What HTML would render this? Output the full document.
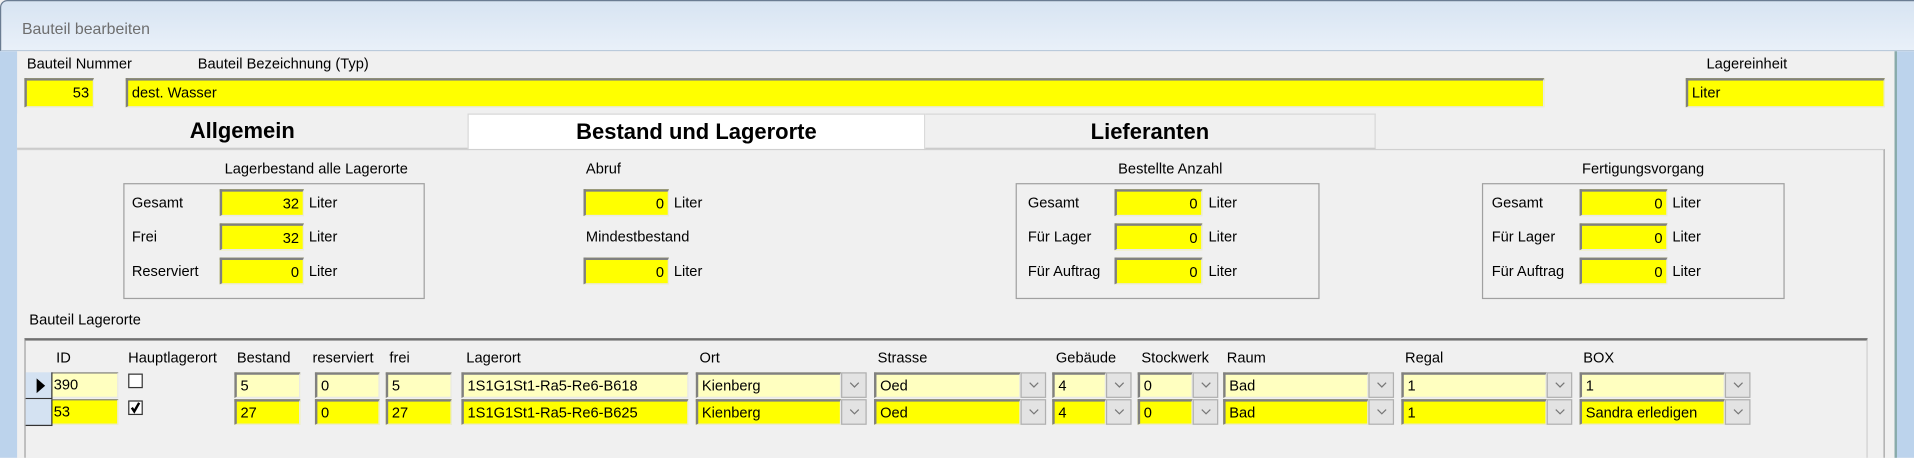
<!DOCTYPE html>
<html><head><meta charset="utf-8"><style>
*{box-sizing:border-box;margin:0;padding:0}
body{width:1914px;height:457px;overflow:hidden;background:#f0f0f0;font-family:"Liberation Sans",Arial,sans-serif}
#w{position:absolute;left:0;top:0;width:1568px;height:375px;transform:scale(1.2207);transform-origin:0 0;background:#f0f0f0;font-size:12px;color:#000}
.a{position:absolute;white-space:nowrap}
.f{position:absolute;background:#ffff00;border-top:2px solid #808080;border-left:2px solid #808080;border-bottom:1px solid #e8e8e8;border-right:1px solid #e8e8e8;padding:1px 3px;line-height:18px;font-size:12px;white-space:nowrap;overflow:hidden}
.r{text-align:right}
.l{background:#ffffc0}
.cb{position:absolute;width:21px;background:#e3e3e3;border:1px solid #b0b0b0}
.cb svg{position:absolute;left:6px;top:7px}
.grp{position:absolute;border:1px solid #a0a0a0;}
.tab{position:absolute;top:93px;height:29px;font-weight:bold;font-size:18px;text-align:center;line-height:29px;border-bottom:1px solid #c8c8c8}
</style></head><body><div id="w">
<div class="a" style="left:0;top:0;width:1568px;height:42px;background:linear-gradient(#d7e4f2,#e9f0f9);border-bottom:1px solid #b8c8da;border-top:1px solid #6a7c92;border-left:1px solid #6a7c92;border-top-left-radius:6px"></div>
<div class="a" style="left:18px;top:16px;font-size:13px;color:#6e6e6e">Bauteil bearbeiten</div>
<div class="a" style="left:0;top:42px;width:14px;height:333px;background:#bcd3ec"></div>
<div class="a" style="left:1552px;top:42px;width:16px;height:333px;background:#bcd3ec;border-left:2px solid #8aa"></div>
<div class="a" style="left:22px;top:45px">Bauteil Nummer</div>
<div class="a" style="left:162px;top:45px">Bauteil Bezeichnung (Typ)</div>
<div class="a" style="left:1398px;top:45px">Lagereinheit</div>
<div class="f r" style="left:20px;top:64px;width:57px;height:24px">53</div>
<div class="f" style="left:103px;top:64px;width:1162px;height:24px">dest. Wasser</div>
<div class="f" style="left:1381px;top:64px;width:163px;height:24px">Liter</div>
<div class="tab" style="left:14px;width:369px;background:#f0f0f0">Allgemein</div>
<div class="tab" style="left:383px;width:375px;background:#fff;border:1px solid #d8d8d8;border-bottom:none;height:30px">Bestand und Lagerorte</div>
<div class="tab" style="left:758px;width:369px;background:#f0f0f0;border-top:1px solid #d8d8d8;border-right:1px solid #d8d8d8">Lieferanten</div>
<div class="a" style="left:14px;top:122px;width:1530px;height:253px;border-right:1px solid #a0a0a0;border-top:1px solid #d0d0d0"></div>

<div class="a" style="left:184px;top:131px">Lagerbestand alle Lagerorte</div>
<div class="grp" style="left:101px;top:150px;width:247px;height:95px"></div>
<div class="a" style="left:108px;top:159px">Gesamt</div><div class="f r" style="left:180px;top:155px;width:69px;height:22px">32</div><div class="a" style="left:253px;top:159px">Liter</div>
<div class="a" style="left:108px;top:187px">Frei</div><div class="f r" style="left:180px;top:183px;width:69px;height:22px">32</div><div class="a" style="left:253px;top:187px">Liter</div>
<div class="a" style="left:108px;top:215px">Reserviert</div><div class="f r" style="left:180px;top:211px;width:69px;height:22px">0</div><div class="a" style="left:253px;top:215px">Liter</div>

<div class="a" style="left:480px;top:131px">Abruf</div>
<div class="f r" style="left:478px;top:155px;width:70px;height:22px">0</div><div class="a" style="left:552px;top:159px">Liter</div>
<div class="a" style="left:480px;top:187px">Mindestbestand</div>
<div class="f r" style="left:478px;top:211px;width:70px;height:22px">0</div><div class="a" style="left:552px;top:215px">Liter</div>

<div class="a" style="left:916px;top:131px">Bestellte Anzahl</div>
<div class="grp" style="left:832px;top:150px;width:249px;height:95px"></div>
<div class="a" style="left:842px;top:159px">Gesamt</div><div class="f r" style="left:913px;top:155px;width:72px;height:22px">0</div><div class="a" style="left:990px;top:159px">Liter</div>
<div class="a" style="left:842px;top:187px">Für Lager</div><div class="f r" style="left:913px;top:183px;width:72px;height:22px">0</div><div class="a" style="left:990px;top:187px">Liter</div>
<div class="a" style="left:842px;top:215px">Für Auftrag</div><div class="f r" style="left:913px;top:211px;width:72px;height:22px">0</div><div class="a" style="left:990px;top:215px">Liter</div>

<div class="a" style="left:1296px;top:131px">Fertigungsvorgang</div>
<div class="grp" style="left:1214px;top:150px;width:248px;height:95px"></div>
<div class="a" style="left:1222px;top:159px">Gesamt</div><div class="f r" style="left:1294px;top:155px;width:72px;height:22px">0</div><div class="a" style="left:1370px;top:159px">Liter</div>
<div class="a" style="left:1222px;top:187px">Für Lager</div><div class="f r" style="left:1294px;top:183px;width:72px;height:22px">0</div><div class="a" style="left:1370px;top:187px">Liter</div>
<div class="a" style="left:1222px;top:215px">Für Auftrag</div><div class="f r" style="left:1294px;top:211px;width:72px;height:22px">0</div><div class="a" style="left:1370px;top:215px">Liter</div>

<div class="a" style="left:24px;top:255px">Bauteil Lagerorte</div>
<div class="a" style="left:20px;top:277px;width:1510px;height:98px;border-top:2px solid #707070;border-left:1px solid #a0a0a0;border-right:1px solid #d0d0d0"></div>
<div class="a" style="left:46px;top:286px">ID</div>
<div class="a" style="left:105px;top:286px">Hauptlagerort</div>
<div class="a" style="left:194px;top:286px">Bestand</div>
<div class="a" style="left:256px;top:286px">reserviert</div>
<div class="a" style="left:319px;top:286px">frei</div>
<div class="a" style="left:382px;top:286px">Lagerort</div>
<div class="a" style="left:573px;top:286px">Ort</div>
<div class="a" style="left:719px;top:286px">Strasse</div>
<div class="a" style="left:865px;top:286px">Gebäude</div>
<div class="a" style="left:935px;top:286px">Stockwerk</div>
<div class="a" style="left:1005px;top:286px">Raum</div>
<div class="a" style="left:1151px;top:286px">Regal</div>
<div class="a" style="left:1297px;top:286px">BOX</div>

<div class="a" style="left:21px;top:305px;width:22px;height:22px;background:#d4e2f2;border-right:1px solid #333;border-bottom:1px solid #333"></div>
<div class="a" style="left:30px;top:310px;width:0;height:0;border-left:7px solid #000;border-top:6px solid transparent;border-bottom:6px solid transparent"></div>
<div class="a" style="left:21px;top:327px;width:22px;height:22px;background:#d4e2f2;border-right:1px solid #333;border-bottom:1px solid #333"></div>

<div class="f l" style="left:43px;top:305px;width:54px;height:21px;border-top-width:1px;border-left-width:0;line-height:17px;padding-left:1px">390</div>
<div class="a" style="left:105px;top:306px;width:12px;height:12px;border:1px solid #333;background:#fff"></div>
<div class="f l" style="left:192px;top:305px;width:54px;height:21px;line-height:17px">5</div>
<div class="f l" style="left:258px;top:305px;width:53px;height:21px;line-height:17px">0</div>
<div class="f l" style="left:316px;top:305px;width:54px;height:21px;line-height:17px">5</div>
<div class="f l" style="left:378px;top:305px;width:186px;height:21px;line-height:17px">1S1G1St1-Ra5-Re6-B618</div>

<div class="f" style="left:43px;top:327px;width:54px;height:21px;border-top-width:1px;border-left-width:0;line-height:17px;padding-left:1px">53</div>
<div class="a" style="left:105px;top:328px;width:12px;height:12px;border:1px solid #333;background:#fff"><svg width="10" height="10" style="position:absolute;left:0;top:0"><path d="M2 5 L4 8 L8 1" stroke="#000" stroke-width="2" fill="none"/></svg></div>
<div class="f" style="left:192px;top:327px;width:54px;height:21px;line-height:17px">27</div>
<div class="f" style="left:258px;top:327px;width:53px;height:21px;line-height:17px">0</div>
<div class="f" style="left:316px;top:327px;width:54px;height:21px;line-height:17px">27</div>
<div class="f" style="left:378px;top:327px;width:186px;height:21px;line-height:17px">1S1G1St1-Ra5-Re6-B625</div>

<div class="f l" style="left:570px;top:305px;width:119px;height:21px;line-height:17px">Kienberg</div><div class="cb" style="left:689px;top:305px;height:21px"><svg width="8" height="5"><path d="M0.5 0.5 L4 4 L7.5 0.5" stroke="#777" fill="none"/></svg></div>
<div class="f" style="left:570px;top:327px;width:119px;height:21px;line-height:17px">Kienberg</div><div class="cb" style="left:689px;top:327px;height:21px"><svg width="8" height="5"><path d="M0.5 0.5 L4 4 L7.5 0.5" stroke="#777" fill="none"/></svg></div>
<div class="f l" style="left:716px;top:305px;width:120px;height:21px;line-height:17px">Oed</div><div class="cb" style="left:836px;top:305px;height:21px"><svg width="8" height="5"><path d="M0.5 0.5 L4 4 L7.5 0.5" stroke="#777" fill="none"/></svg></div>
<div class="f" style="left:716px;top:327px;width:120px;height:21px;line-height:17px">Oed</div><div class="cb" style="left:836px;top:327px;height:21px"><svg width="8" height="5"><path d="M0.5 0.5 L4 4 L7.5 0.5" stroke="#777" fill="none"/></svg></div>
<div class="f l" style="left:862px;top:305px;width:44px;height:21px;line-height:17px">4</div><div class="cb" style="left:906px;top:305px;height:21px"><svg width="8" height="5"><path d="M0.5 0.5 L4 4 L7.5 0.5" stroke="#777" fill="none"/></svg></div>
<div class="f" style="left:862px;top:327px;width:44px;height:21px;line-height:17px">4</div><div class="cb" style="left:906px;top:327px;height:21px"><svg width="8" height="5"><path d="M0.5 0.5 L4 4 L7.5 0.5" stroke="#777" fill="none"/></svg></div>
<div class="f l" style="left:932px;top:305px;width:45px;height:21px;line-height:17px">0</div><div class="cb" style="left:977px;top:305px;height:21px"><svg width="8" height="5"><path d="M0.5 0.5 L4 4 L7.5 0.5" stroke="#777" fill="none"/></svg></div>
<div class="f" style="left:932px;top:327px;width:45px;height:21px;line-height:17px">0</div><div class="cb" style="left:977px;top:327px;height:21px"><svg width="8" height="5"><path d="M0.5 0.5 L4 4 L7.5 0.5" stroke="#777" fill="none"/></svg></div>
<div class="f l" style="left:1002px;top:305px;width:119px;height:21px;line-height:17px">Bad</div><div class="cb" style="left:1121px;top:305px;height:21px"><svg width="8" height="5"><path d="M0.5 0.5 L4 4 L7.5 0.5" stroke="#777" fill="none"/></svg></div>
<div class="f" style="left:1002px;top:327px;width:119px;height:21px;line-height:17px">Bad</div><div class="cb" style="left:1121px;top:327px;height:21px"><svg width="8" height="5"><path d="M0.5 0.5 L4 4 L7.5 0.5" stroke="#777" fill="none"/></svg></div>
<div class="f l" style="left:1148px;top:305px;width:119px;height:21px;line-height:17px">1</div><div class="cb" style="left:1267px;top:305px;height:21px"><svg width="8" height="5"><path d="M0.5 0.5 L4 4 L7.5 0.5" stroke="#777" fill="none"/></svg></div>
<div class="f" style="left:1148px;top:327px;width:119px;height:21px;line-height:17px">1</div><div class="cb" style="left:1267px;top:327px;height:21px"><svg width="8" height="5"><path d="M0.5 0.5 L4 4 L7.5 0.5" stroke="#777" fill="none"/></svg></div>
<div class="f l" style="left:1294px;top:305px;width:119px;height:21px;line-height:17px">1</div><div class="cb" style="left:1413px;top:305px;height:21px"><svg width="8" height="5"><path d="M0.5 0.5 L4 4 L7.5 0.5" stroke="#777" fill="none"/></svg></div>
<div class="f" style="left:1294px;top:327px;width:119px;height:21px;line-height:17px">Sandra erledigen</div><div class="cb" style="left:1413px;top:327px;height:21px"><svg width="8" height="5"><path d="M0.5 0.5 L4 4 L7.5 0.5" stroke="#777" fill="none"/></svg></div>
</div></body></html>
